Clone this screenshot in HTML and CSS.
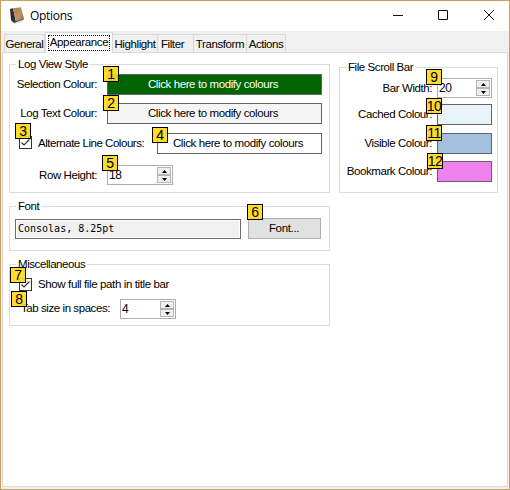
FILE: index.html
```html
<!DOCTYPE html>
<html lang="en">
<head>
<meta charset="utf-8">
<title>Options</title>
<link rel="stylesheet" href="styles.css">
</head>
<body>
<div class="window">
  <header class="titlebar">
    <svg class="app-icon" width="15" height="18" viewBox="0 0 15 18">
      <defs><linearGradient id="cover" x1="0" y1="0" x2="1" y2="1"><stop offset="0" stop-color="#ad8350"/><stop offset=".6" stop-color="#b89468"/><stop offset="1" stop-color="#94703d"/></linearGradient></defs>
      <path d="M1 13L5 16 14 12 12 15 5 17 1 15z" fill="#ddd"/>
      <path d="M0 2L3 1.3 6 15.2 3.5 15.5 1 13z" fill="#302b27"/>
      <path d="M3 1.3L11 .2 14 11.5 6 14z" fill="url(#cover)"/>
      <path d="M3.2 15L6 14 14 11.5V12.300L5 15.500z" fill="#39322b"/>
    </svg>
    <h1>Options</h1>
    <svg class="controls" width="102" height="12" viewBox="0 0 102 12" fill="none" stroke="#111">
      <path d="M0 5.500H10M45.500.5H54.500V9.500H45.500z"/><path d="M91 0L101 10M101 0L91 10"/>
    </svg>
  </header>
  <nav class="tabs">
    <span class="tab general">General</span><span class="tab active"><span class="focus">Appearance</span></span><span class="tab highlight">Highlight</span><span class="tab filter">Filter</span><span class="tab transform">Transform</span><span class="tab actions">Actions</span>
  </nav>
  <main class="page">
    <div class="column left">
      <section class="group log">
        <h2>Log View Style</h2>
        <div class="row"><label>Selection Colour:</label><button class="swatch green">Click here to modify colours<i class="badge b1">1</i></button></div>
        <div class="row text-row"><label>Log Text Colour:</label><button class="swatch pale">Click here to modify colours<i class="badge b2">2</i></button></div>
        <div class="row alt-row"><span class="check"><svg width="11" height="11" viewBox="0 0 11 11"><path d="M1.500 5.500L4 8 9.500 2.500"/></svg><i class="badge b3">3</i></span><label>Alternate Line Colours:</label><button class="swatch">Click here to modify colours<i class="badge b4">4</i></button></div>
        <div class="row height-row"><label>Row Height:</label><div class="spinner wide">18<span class="arrows"><b><svg width="5" height="3"><path d="M0 3L2.500 0 5 3z"/></svg></b><b><svg width="5" height="3"><path d="M0 0L2.500 3 5 0z"/></svg></b></span><i class="badge b5">5</i></div></div>
      </section>
      <section class="group font">
        <h2>Font</h2>
        <div class="row"><div class="font-name">Consolas, 8.25pt</div><button class="font-button">Font...<i class="badge b6">6</i></button></div>
      </section>
      <section class="group misc">
        <h2>Miscellaneous</h2>
        <div class="row path-row"><span class="check"><svg width="11" height="11" viewBox="0 0 11 11"><path d="M1.500 5.500L4 8 9.500 2.500"/></svg><i class="badge b7">7</i></span><label>Show full file path in title bar</label></div>
        <div class="row size-row"><label>Tab size in spaces:</label><div class="spinner">4<span class="arrows"><b><svg width="5" height="3"><path d="M0 3L2.500 0 5 3z"/></svg></b><b><svg width="5" height="3"><path d="M0 0L2.500 3 5 0z"/></svg></b></span></div><i class="badge b8">8</i></div>
      </section>
    </div>
    <section class="group bar">
      <h2>File Scroll Bar</h2>
      <div class="row"><label>Bar Width:</label><div class="spinner">20<span class="arrows"><b><svg width="5" height="3"><path d="M0 3L2.500 0 5 3z"/></svg></b><b><svg width="5" height="3"><path d="M0 0L2.500 3 5 0z"/></svg></b></span><i class="badge b9">9</i></div></div>
      <div class="row cached"><label>Cached Colour:</label><span class="chip cyan"><i class="badge b10">10</i></span></div>
      <div class="row visible"><label>Visible Colour:</label><span class="chip blue"><i class="badge b11">11</i></span></div>
      <div class="row bookmark"><label>Bookmark Colour:</label><span class="chip pink"><i class="badge b12">12</i></span></div>
    </section>
  </main>
</div>
</body>
</html>
```
FILE: styles.css
```css
* { box-sizing: border-box; }
body { margin: 0; font: 11.5px/13px "Liberation Sans", Arial, sans-serif; letter-spacing: -0.43px; color: #000; }
svg { display: block; }
.window { width: 510px; height: 490px; border: 1px solid #c8a060; background: #f0f0f0; display: flex; flex-direction: column; }
.titlebar { height: 30px; background: #fff; display: flex; padding: 0 14px 0 9px; flex: none; }
.app-icon { margin-top: 6px; }
h1 { font: 12px/16px "Open Sans", sans-serif; margin: 7px auto 0 5px; letter-spacing: -0.3px; }
.controls { margin-top: 9px; }
.tabs { display: flex; align-items: flex-end; height: 21px; flex: none; padding-left: 3px; }
.tab { height: 18px; border: 1px solid #d9d9d9; border-width: 1px 1px 0 0; padding-top: 3px; text-align: center; white-space: nowrap; }
.general { width: 41px; border-left-width: 1px; }
.tab.active { width: 68px; height: 21px; background: #fff; border-left-width: 1px; margin-bottom: -1px; padding: 2px 0 0 2px; z-index: 1; letter-spacing: -0.35px; }
.focus { display: block; width: 62px; height: 16px; border: 1px dotted #000; line-height: 13px; }
.highlight { width: 45px; letter-spacing: -0.4px; }
.filter { width: 36px; padding-right: 6px; letter-spacing: -0.4px; }
.transform { width: 53px; letter-spacing: -0.4px; }
.actions { width: 39px; }
.page { flex: none; width: 506px; height: 435px; margin-left: 1px; background: #fff; border: 1px solid #d9d9d9; display: flex; gap: 9px; padding: 11px 0 0 6px; align-items: flex-start; }
.left { display: flex; flex-direction: column; gap: 13px; width: 321px; }
.group { border: 1px solid #dcdcdc; }
h2 { font: inherit; background: #fff; width: max-content; margin: -7px 0 0 6px; padding: 0 2px; height: 13px; }
.row { display: flex; position: relative; align-items: flex-start; white-space: nowrap; }
label { line-height: 13px; padding-top: 4px; }
.log { height: 129px; padding-right: 7px; }
.log .row { justify-content: flex-end; margin-top: 3px; }
.log label { margin-right: 10px; }
.log .text-row { margin-top: 8px; }
.log .alt-row { margin-top: 9px; }
.log .height-row { margin-top: 11px; padding-right: 149px; }
button { font: inherit; letter-spacing: inherit; color: #000; padding: 0; }
.swatch { position: relative; width: 215px; height: 21px; border: 1px solid #646464; background: #fff; letter-spacing: -0.4px; padding-right: 3px; }
.green { background: #006400; color: #fff; }
.pale { background: #f5f5f5; }
.alt-row .swatch { width: 165px; }
.alt-row label { width: 106px; margin: 0 13px 0 6px; letter-spacing: -0.47px; }
.check { position: relative; width: 13px; height: 13px; border: 1px solid #333; background: #fff; }
.check path { fill: none; stroke: #333; stroke-width: 1.2; }
.alt-row .check { margin-top: 3px; }
.spinner { position: relative; width: 55px; height: 20px; border: 1px solid #abadb3; background: #fff; font-size: 12px; line-height: 18px; padding-left: 1px; letter-spacing: -0.3px; }
.wide { width: 66px; }
.arrows { position: absolute; right: 1px; top: 1px; width: 14px; height: 16px; display: flex; flex-direction: column; }
.arrows b { height: 8px; border: 1px solid #b5b5b5; background: #f0f0f0; display: flex; align-items: center; justify-content: center; }
.font { height: 45px; }
.font .row { padding-left: 5px; margin-top: 5px; }
.font-name { width: 226px; height: 20px; margin-top: 1px; border: 1px solid #6c6c6c; outline: 1px solid #fff; outline-offset: -2px; background: #f0f0f0; padding-left: 2px; font: 10px/18px "DejaVu Sans Mono", monospace; letter-spacing: 0; }
.font-button { position: relative; width: 73px; height: 21px; margin-left: 7px; border: 1px solid #adadad; background: #e1e1e1; letter-spacing: -0.35px; padding-right: 1px; }
.misc { height: 62px; }
.path-row { margin: 7px 0 0 9px; }
.path-row label { padding: 0; margin-left: 6px; letter-spacing: -0.38px; }
.size-row { margin: 8px 0 0 11px; }
.size-row label { padding-top: 3px; width: 89px; margin-right: 10px; }
.size-row .spinner { width: 56px; }
.bar { width: 159px; height: 126px; margin-top: 3px; }
.bar .row { justify-content: flex-end; padding-right: 5px; margin-top: 4px; }
.bar .cached { margin-top: 6px; }
.bar .visible { margin-top: 8px; }
.bar .bookmark { margin-top: 7px; }
.bar label { margin-right: 5px; }
.chip { position: relative; width: 55px; height: 21px; border: 1px solid #646464; }
.cyan { background: #e8f4fa; }
.blue { background: #a2bfdb; }
.pink { background: #ee82ee; }
.badge { position: absolute; width: 16px; height: 16px; border: 1px solid #000; background: rgba(255, 216, 30, .93); color: #000; font: 14px/14px "Liberation Sans", Arial, sans-serif; letter-spacing: -0.5px; text-align: center; display: flex; justify-content: center; }
.b1 { left: -5px; top: -9px; }
.b2 { left: -5px; top: -9px; }
.b3 { left: -5px; top: -14px; }
.b4 { left: -6px; top: -7px; }
.b5 { left: -6px; top: -11px; }
.b6 { left: -2px; top: -15px; }
.b7 { left: -10px; top: -12px; }
.b8 { left: -10px; top: -8px; }
.b9 { left: -12px; top: -10px; }
.b10 { left: -12px; top: -7px; }
.b11 { left: -12px; top: -9px; }
.b12 { left: -11px; top: -9px; }
```
